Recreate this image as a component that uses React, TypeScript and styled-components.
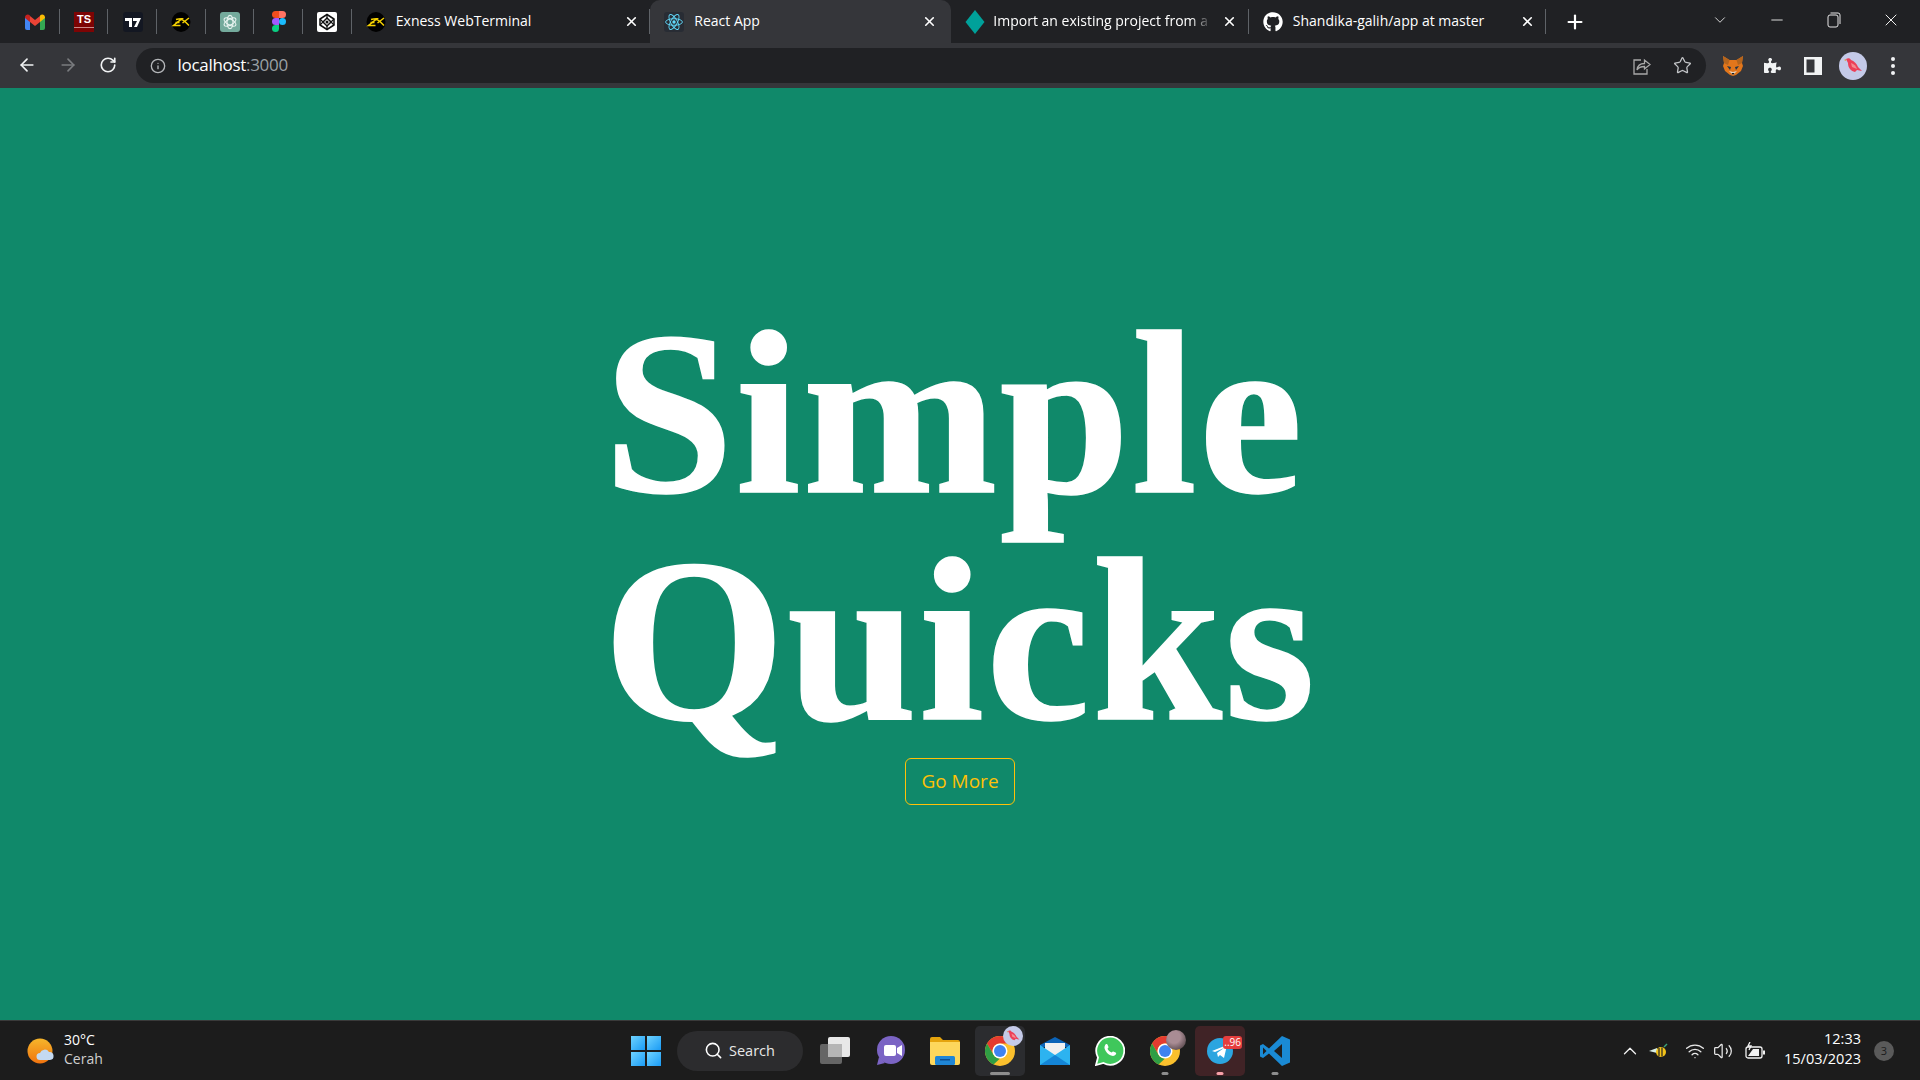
import React from 'react';
import styled, { createGlobalStyle } from 'styled-components';
import {
  ArrowLeft,
  ArrowRight,
  ChevronDown,
  ChevronUp,
  Info,
  Minus,
  Plus,
  RotateCw,
  Search,
  Star,
  Volume2,
  Wifi,
  X,
} from 'lucide-react';
import { FaGithub, FaPuzzlePiece } from 'react-icons/fa';

const GlobalStyle = createGlobalStyle`
  html, body {
    margin: 0;
    padding: 0;
    height: 100%;
    overflow: hidden;
    background: #10896a;
  }
`;

const uiFont = `"Open Sans", "Noto Sans", "Liberation Sans", sans-serif`;

/* ---------- drawn icons ---------- */

const GmailIcon = () => (
  <svg width="20" height="16" viewBox="0 0 20 16">
    <path d="M0 3v11a2 2 0 0 0 2 2h3V7z" fill="#4285f4" />
    <path d="M20 3v11a2 2 0 0 1-2 2h-3V7z" fill="#34a853" />
    <path d="M5 8V2l5 4 5-4v6l-5 4z" fill="#ea4335" />
    <path d="M0 3.5C0 1 2.6-.5 4.5 1L5 2v6L0 4z" fill="#c5221f" />
    <path d="M20 3.5C20 1 17.4-.5 15.5 1L15 2v6l5-4z" fill="#fbbc04" />
  </svg>
);

const TradingIcon = () => (
  <svg width="20" height="20" viewBox="0 0 20 20">
    <rect width="20" height="20" rx="3" fill="#131722" />
    <path d="M2 6h7v9H6V9H2zM10 6h8l-4 9h-3l3-6h-4z" fill="#fff" />
  </svg>
);

const ExnessIcon = () => (
  <svg width="20" height="20" viewBox="0 0 20 20">
    <ellipse cx="10" cy="10" rx="9.5" ry="10" fill="#000" />
    <g fill="none" stroke="#f4d000" strokeWidth="1.5">
      <path d="M5 7.5c2-.6 4-.9 6-.8L2.5 13.5h7" />
      <path d="M10 7.5c2.5 0 5 3 8 6" />
      <path d="M18 6l-6.5 5" />
      <path d="M4.5 10.5h4" />
    </g>
  </svg>
);

const GptIcon = () => (
  <svg width="20" height="20" viewBox="0 0 20 20">
    <rect width="20" height="20" rx="3" fill="#74aa9c" />
    <g fill="none" stroke="#e8f3f0" strokeWidth="1.2">
      <ellipse cx="10" cy="10" rx="3" ry="6.6" />
      <ellipse cx="10" cy="10" rx="3" ry="6.6" transform="rotate(60 10 10)" />
      <ellipse cx="10" cy="10" rx="3" ry="6.6" transform="rotate(120 10 10)" />
    </g>
  </svg>
);

const FigmaIcon = () => (
  <svg width="14" height="21" viewBox="0 0 14 21">
    <path d="M7 0H3.5a3.5 3.5 0 0 0 0 7H7z" fill="#f24e1e" />
    <path d="M7 0h3.5a3.5 3.5 0 0 1 0 7H7z" fill="#ff7262" />
    <path d="M7 7H3.5a3.5 3.5 0 0 0 0 7H7z" fill="#a259ff" />
    <circle cx="10.5" cy="10.5" r="3.5" fill="#1abcfe" />
    <path d="M7 14H3.5A3.5 3.5 0 1 0 7 17.5z" fill="#0acf83" />
  </svg>
);

const CodepenIcon = () => (
  <svg width="20" height="20" viewBox="0 0 20 20">
    <rect width="20" height="20" rx="2" fill="#fff" />
    <path d="M10 2.5l7 4.5v6l-7 4.5L3 13V7z" fill="none" stroke="#111" strokeWidth="1.5" />
    <path d="M10 6l4 4-4 4-4-4z" fill="none" stroke="#111" strokeWidth="1.5" />
    <path d="M10 2.5V6M10 14v3.5M3 7l3 3-3 3M17 7l-3 3 3 3" fill="none" stroke="#111" strokeWidth="1.2" />
    <circle cx="10" cy="10" r="1.5" fill="#111" />
  </svg>
);

const ReactIcon = () => (
  <svg width="20" height="20" viewBox="0 0 20 20">
    <rect width="20" height="20" rx="3" fill="#282c34" />
    <circle cx="10" cy="10" r="1.7" fill="#61dafb" />
    <g fill="none" stroke="#61dafb" strokeWidth="0.9">
      <ellipse cx="10" cy="10" rx="8.4" ry="3.3" />
      <ellipse cx="10" cy="10" rx="8.4" ry="3.3" transform="rotate(60 10 10)" />
      <ellipse cx="10" cy="10" rx="8.4" ry="3.3" transform="rotate(120 10 10)" />
    </g>
  </svg>
);

const DiamondIcon = () => (
  <svg width="20" height="24" viewBox="0 0 20 24">
    <path d="M10 0l9.5 12L10 24 .5 12z" fill="#00a19a" />
  </svg>
);

const RestoreIcon = () => (
  <svg width="14" height="16" viewBox="0 0 14 16" fill="none" stroke="#e6e6e6">
    <rect x="1" y="3" width="10" height="12" rx="2" />
    <path d="M3.5 1H11a2 2 0 0 1 2 2v9" />
  </svg>
);

const ShareIcon = () => (
  <svg width="18" height="18" viewBox="0 0 18 18" fill="none" stroke="#a8a8a8" strokeWidth="1.3">
    <path d="M8 3H1v14h13v-5" />
    <path d="M4 13c.5-4.5 3.5-6.5 7.5-6.5V3L17 7.5 11.5 12V9.5C8 9.5 5.5 10.5 4 13z" />
  </svg>
);

const FoxIcon = () => (
  <svg width="20" height="20" viewBox="0 0 20 20">
    <path d="M0 0l6.5 4h7L20 0l-1 7 1 3-2 5-5 4-3 1-3-1-5-4-2-5 1-3z" fill="#e2761b" />
    <path d="M0 0l6.5 4L5 9 1 7zM20 0l-6.5 4L15 9l4-2z" fill="#b5651d" />
    <path d="M4 10l4 1-1 3zM16 10l-4 1 1 3z" fill="#233447" />
    <path d="M6 15l4 4 4-4-4 1z" fill="#e4d5c3" />
    <path d="M8.5 17h3l-1.5 2z" fill="#161616" />
  </svg>
);

const SidePanelIcon = () => (
  <svg width="18" height="18" viewBox="0 0 18 18">
    <path d="M0 0h18v18H0zM2.5 2.5v13h8v-13z" fill="#f1f3f4" fillRule="evenodd" />
  </svg>
);

const BirdAvatar = ({ size }: { size: number }) => (
  <svg width={size} height={size} viewBox="0 0 28 28">
    <circle cx="14" cy="14" r="14" fill="#c4cae8" />
    <path d="M7 7c2-1 4-1 5 1 3 1 6 4 7 7l4 4-5-1-2 2c-4-1-7-4-7-9z" fill="#ec3f58" />
    <path d="M7 7l-2 1 2 1z" fill="#d9a04a" />
    <path d="M12 11c3 1 5 3 6 6l-5-2z" fill="#f58a8f" />
  </svg>
);

const WeatherIcon = () => (
  <svg width="28" height="28" viewBox="0 0 28 28">
    <defs>
      <linearGradient id="sun" x1="0" y1="0" x2="0" y2="1">
        <stop offset="0" stopColor="#f6b62b" />
        <stop offset="1" stopColor="#f0730f" />
      </linearGradient>
    </defs>
    <circle cx="13" cy="14" r="12.5" fill="url(#sun)" />
    <path d="M13 23a3.5 3.5 0 0 1 0-7 5 5 0 0 1 9-1 4 4 0 0 1 1 8z" fill="#c4d9f2" />
  </svg>
);

const StackIcon = () => (
  <svg width="32" height="30" viewBox="0 0 32 30">
    <rect x="9" y="1" width="22" height="20" rx="2" fill="#e8e8e8" />
    <rect x="1" y="8" width="22" height="20" rx="2" fill="#6e6e6e" opacity="0.9" />
    <rect x="9" y="8" width="14" height="13" fill="#b5b5b5" />
  </svg>
);

const MeetIcon = () => (
  <svg width="30" height="30" viewBox="0 0 30 30">
    <circle cx="16" cy="14" r="14" fill="#7b64c4" />
    <path d="M2 29l2-8 6 6z" fill="#7b64c4" />
    <rect x="9" y="9" width="12" height="11" rx="2" fill="#fff" />
    <path d="M22 12l5-3v11l-5-3z" fill="#fff" />
  </svg>
);

const FolderIcon = () => (
  <svg width="30" height="28" viewBox="0 0 30 28">
    <path d="M0 2a2 2 0 0 1 2-2h8l3 3h15a2 2 0 0 1 2 2v3H0z" fill="#e5a40d" />
    <path d="M0 5h30v21a2 2 0 0 1-2 2H2a2 2 0 0 1-2-2z" fill="#fdd75c" />
    <rect x="5" y="19" width="20" height="9" rx="1.5" fill="#1f86d6" />
    <rect x="10" y="22" width="10" height="1.5" fill="#0c4f91" />
  </svg>
);

const ChromeIcon = () => (
  <svg width="30" height="30" viewBox="0 0 30 30">
    <circle cx="15" cy="15" r="15" fill="#fbc02d" />
    <path d="M15 0a15 15 0 0 1 13 7.5H15a7.5 7.5 0 0 0-6.5 11.25L2 7.5A15 15 0 0 1 15 0z" fill="#e53b30" />
    <path d="M2 7.5l6.5 11.25A7.5 7.5 0 0 0 15 22.5L8.5 28.5A15 15 0 0 1 2 7.5z" fill="#2f9e44" />
    <circle cx="15" cy="15" r="7.5" fill="#fff" />
    <circle cx="15" cy="15" r="6" fill="#3f83f0" />
  </svg>
);

const MailIcon = () => (
  <svg width="30" height="28" viewBox="0 0 30 28">
    <path d="M0 8L15 0l15 8v2H0z" fill="#0c64b8" />
    <path d="M5 6h20v9l-10 5-10-5z" fill="#f0f0f0" />
    <path d="M0 8l15 10L30 8v20H0z" fill="#2db3f0" />
    <path d="M0 28l15-10 15 10z" fill="#1485d6" />
  </svg>
);

const WhatsappIcon = () => (
  <svg width="30" height="30" viewBox="0 0 30 30">
    <path d="M1 29l2-7.5A14 14 0 1 1 8.5 27z" fill="#3fc75b" stroke="#fff" strokeWidth="1.8" />
    <path
      d="M10.5 8.5c1-.8 1.8-.5 2.2.5l.8 2c.1.5-.5 1.2-1 1.8.8 1.7 2.2 3 4 3.8.6-.5 1.2-1.3 1.8-1.2l2.2 1c.8.4.9 1.2.2 2.2-1 1.3-2.8 1.7-4.7.8-3-1.2-5.3-3.5-6.3-6.5-.5-1.8 0-3.3.8-4.4z"
      fill="#fff"
    />
  </svg>
);

const TelegramIcon = () => (
  <svg width="26" height="26" viewBox="0 0 26 26">
    <circle cx="13" cy="13" r="13" fill="#2ca5e0" />
    <path d="M5 13l15-6-3 13-4-3-2 2-1-4 7-5-9 4z" fill="#fff" />
  </svg>
);

const VscodeIcon = () => (
  <svg width="30" height="30" viewBox="0 0 30 30">
    <path d="M22 0l8 3.5v23L22 30 9 17.5 3 22l-3-1.5v-11L3 8l6 4.5z" fill="#1a8ad4" />
    <path d="M22 8l-8 7 8 7z" fill="#1f1f1f" />
    <path d="M3 11.5v7l3.5-3.5z" fill="#1f1f1f" />
  </svg>
);

const BeeIcon = () => (
  <svg width="20" height="16" viewBox="0 0 20 16">
    <path d="M0 8l8-3v5z" fill="#d8efe8" />
    <ellipse cx="12" cy="9" rx="5" ry="5" fill="#f2c21a" />
    <path d="M10 5v8M13 4.5v9" stroke="#222" strokeWidth="1.2" />
    <path d="M15 4l3-3" stroke="#3aa37c" strokeWidth="1.5" />
  </svg>
);

const BatteryIcon = () => (
  <svg width="21" height="18" viewBox="0 0 21 18" fill="none" stroke="#f2f2f2" strokeWidth="1.3">
    <rect x="1" y="5" width="16" height="11" rx="2" />
    <path d="M19 8.5v4" strokeWidth="2" />
    <path d="M3 14l5-7h6v7z" fill="#f2f2f2" stroke="none" />
    <path d="M5 0L3 4h3L4 8" />
  </svg>
);

/* ---------- page ---------- */

export default function App() {
  const pinnedTabs = [
    <GmailIcon />,
    <TsTile>TS</TsTile>,
    <TradingIcon />,
    <ExnessIcon />,
    <GptIcon />,
    <FigmaIcon />,
    <CodepenIcon />,
  ];

  const dockItems: {
    icon: React.ReactNode;
    mark?: 'wide' | 'dot' | 'pink';
    tint?: 'grey' | 'red';
    badge?: React.ReactNode;
  }[] = [
    { icon: <StackIcon /> },
    { icon: <MeetIcon /> },
    { icon: <FolderIcon /> },
    {
      icon: <ChromeIcon />,
      mark: 'wide',
      tint: 'grey',
      badge: (
        <AvatarBadge>
          <BirdAvatar size={20} />
        </AvatarBadge>
      ),
    },
    { icon: <MailIcon /> },
    { icon: <WhatsappIcon /> },
    { icon: <ChromeIcon />, mark: 'dot', badge: <PhotoBadge /> },
    { icon: <TelegramIcon />, mark: 'pink', tint: 'red', badge: <CountBadge>..96</CountBadge> },
    { icon: <VscodeIcon />, mark: 'dot' },
  ];

  return (
    <Screen>
      <GlobalStyle />

      <TabStrip>
        <PinnedGroup>
          {pinnedTabs.map((icon, i) => (
            <PinnedTab key={i}>{icon}</PinnedTab>
          ))}
        </PinnedGroup>
        <Tab $w={298.5} $separated>
          <TabFavicon>
            <ExnessIcon />
          </TabFavicon>
          <TabTitle>Exness WebTerminal</TabTitle>
          <TabClose>
            <X size={15} strokeWidth={2.6} />
          </TabClose>
        </Tab>
        <Tab $w={301} $active>
          <TabFavicon>
            <ReactIcon />
          </TabFavicon>
          <TabTitle>React App</TabTitle>
          <TabClose>
            <X size={15} strokeWidth={2.6} />
          </TabClose>
        </Tab>
        <Tab $w={297.5} $separated>
          <TabFavicon $narrow>
            <DiamondIcon />
          </TabFavicon>
          <TabTitle $faded>Import an existing project from a</TabTitle>
          <TabClose>
            <X size={15} strokeWidth={2.6} />
          </TabClose>
        </Tab>
        <Tab $w={297.5} $separated>
          <TabFavicon>
            <FaGithub size={20} color="#fff" />
          </TabFavicon>
          <TabTitle>Shandika-galih/app at master</TabTitle>
          <TabClose>
            <X size={15} strokeWidth={2.6} />
          </TabClose>
        </Tab>
        <NewTab>
          <Plus size={22} strokeWidth={2.4} color="#fff" />
        </NewTab>
        <WindowControls>
          <WindowButton $w={57}>
            <ChevronDown size={18} strokeWidth={1.2} color="#e6e6e6" />
          </WindowButton>
          <WindowButton $w={58}>
            <Minus size={18} strokeWidth={1.2} color="#f0f0f0" />
          </WindowButton>
          <WindowButton $w={56}>
            <RestoreIcon />
          </WindowButton>
          <WindowButton $w={58}>
            <X size={20} strokeWidth={1.2} color="#f0f0f0" />
          </WindowButton>
        </WindowControls>
      </TabStrip>

      <Toolbar>
        <NavButton>
          <ArrowLeft size={20} strokeWidth={2} color="#f1f3f4" />
        </NavButton>
        <NavButton>
          <ArrowRight size={20} strokeWidth={2} color="#7a7c7f" />
        </NavButton>
        <NavButton>
          <RotateCw size={18} strokeWidth={2.2} color="#f1f3f4" />
        </NavButton>
        <AddressBar>
          <Info size={16} strokeWidth={2} color="#b5b7ba" />
          <Url>
            localhost<UrlPort>:3000</UrlPort>
          </Url>
          <AddressActions>
            <ShareIcon />
            <Star size={19} strokeWidth={1.6} color="#c4c6c9" />
          </AddressActions>
        </AddressBar>
        <Extensions>
          <ExtButton>
            <FoxIcon />
          </ExtButton>
          <ExtButton>
            <FaPuzzlePiece size={17} color="#f1f3f4" />
          </ExtButton>
          <ExtButton>
            <SidePanelIcon />
          </ExtButton>
          <ExtButton>
            <BirdAvatar size={28} />
          </ExtButton>
          <ExtButton>
            <MenuDots>
              <i />
              <i />
              <i />
            </MenuDots>
          </ExtButton>
        </Extensions>
      </Toolbar>

      <Page>
        <Heading>
          <HeadingLine $nudge={12}>Simple</HeadingLine>
          <HeadingLine $nudge={0}>Quicks</HeadingLine>
        </Heading>
        <GoMore>Go More</GoMore>
      </Page>

      <Taskbar>
        <Weather>
          <WeatherIcon />
          <WeatherText>
            <span>30°C</span>
            <WeatherNote>Cerah</WeatherNote>
          </WeatherText>
        </Weather>
        <Dock>
          <DockSlot $w={52}>
            <WinGrid>
              <WinPane />
              <WinPane />
              <WinPane />
              <WinPane />
            </WinGrid>
          </DockSlot>
          <SearchPill>
            <Search size={19} strokeWidth={2} color="#fff" />
            Search
          </SearchPill>
          {dockItems.map((item, i) => (
            <DockItem key={i} $tint={item.tint}>
              {item.icon}
              {item.badge}
              {item.mark && <RunMark $kind={item.mark} />}
            </DockItem>
          ))}
        </Dock>
        <Tray>
          <TrayIcon $gap={0}>
            <ChevronUp size={22} strokeWidth={1.4} color="#f2f2f2" />
          </TrayIcon>
          <TrayIcon $gap={8}>
            <BeeIcon />
          </TrayIcon>
          <TrayIcon $gap={16}>
            <Wifi size={20} strokeWidth={1.6} color="#e8e8e8" />
          </TrayIcon>
          <TrayIcon $gap={8}>
            <Volume2 size={20} strokeWidth={1.5} color="#e8e8e8" />
          </TrayIcon>
          <TrayIcon $gap={12}>
            <BatteryIcon />
          </TrayIcon>
          <Clock>
            <span>12:33</span>
            <span>15/03/2023</span>
          </Clock>
          <NotifyCount>3</NotifyCount>
        </Tray>
      </Taskbar>
    </Screen>
  );
}

/* ---------- styles ---------- */

const Screen = styled.div`
  width: 1920px;
  height: 1080px;
  display: flex;
  flex-direction: column;
  font-family: ${uiFont};
`;

const TabStrip = styled.div`
  height: 43px;
  flex: none;
  display: flex;
  align-items: stretch;
  box-sizing: border-box;
  background: #202124;
  padding-left: 11px;
`;

const PinnedGroup = styled.div`
  display: flex;
`;

const PinnedTab = styled.div`
  width: 48.7px;
  display: flex;
  align-items: center;
  justify-content: center;
  position: relative;

  &::after {
    content: '';
    position: absolute;
    right: 0;
    top: 9px;
    bottom: 9px;
    width: 1px;
    background: #5f6368;
  }
`;

const TsTile = styled.div`
  width: 20px;
  height: 20px;
  background: #7d0404;
  color: #fff;
  font: bold 11px "Liberation Sans", sans-serif;
  line-height: 14px;
  text-align: center;
  box-sizing: border-box;
  border-bottom: 4px solid #7d0404;
  box-shadow: inset 0 -1px 0 #c98a8a;
`;

const Tab = styled.div<{ $w: number; $active?: boolean; $separated?: boolean }>`
  width: ${(p) => p.$w}px;
  flex: none;
  display: flex;
  align-items: center;
  position: relative;
  box-sizing: border-box;
  padding: 0 ${(p) => (p.$active ? 12 : 9)}px 0 14px;
  background: ${(p) => (p.$active ? '#35363a' : 'transparent')};
  border-radius: ${(p) => (p.$active ? '10px 10px 0 0' : '0')};

  &::after {
    content: '';
    display: ${(p) => (p.$separated ? 'block' : 'none')};
    position: absolute;
    right: 0;
    top: 9px;
    bottom: 9px;
    width: 1px;
    background: #5f6368;
  }
`;

const TabFavicon = styled.div<{ $narrow?: boolean }>`
  width: 20px;
  height: 24px;
  flex: none;
  display: flex;
  align-items: center;
  justify-content: center;
  margin-right: ${(p) => (p.$narrow ? 8 : 10)}px;
`;

const TabTitle = styled.div<{ $faded?: boolean }>`
  flex: 1;
  min-width: 0;
  overflow: hidden;
  white-space: nowrap;
  color: #fff;
  font-size: 14px;
  line-height: 20px;
  padding-bottom: 2px;
  ${(p) =>
    p.$faded
      ? `-webkit-mask-image: linear-gradient(to right, #000 90%, transparent 100%);
         mask-image: linear-gradient(to right, #000 90%, transparent 100%);`
      : ''}
`;

const TabClose = styled.div`
  width: 20px;
  flex: none;
  display: flex;
  align-items: center;
  justify-content: center;
  margin-left: 8px;
  color: #fff;
`;

const NewTab = styled.div`
  width: 58px;
  display: flex;
  align-items: center;
  justify-content: center;
`;

const WindowControls = styled.div`
  margin-left: auto;
  display: flex;
  padding-bottom: 4px;
`;

const WindowButton = styled.div<{ $w: number }>`
  width: ${(p) => p.$w}px;
  display: flex;
  align-items: center;
  justify-content: center;
`;

const Toolbar = styled.div`
  height: 45px;
  flex: none;
  display: flex;
  align-items: center;
  background: #35363a;
  padding: 0 8px 0 7px;
`;

const NavButton = styled.div`
  width: 40.5px;
  height: 35px;
  flex: none;
  display: flex;
  align-items: center;
  justify-content: center;
  padding-bottom: 2px;
  box-sizing: border-box;
`;

const AddressBar = styled.div`
  width: 1570px;
  height: 35px;
  margin-left: 7px;
  flex: none;
  display: flex;
  align-items: center;
  background: #202124;
  border-radius: 18px;
  padding: 0 14px;
  box-sizing: border-box;
`;

const Url = styled.div`
  margin-left: 12px;
  padding-bottom: 2px;
  color: #fff;
  font-size: 17px;
  letter-spacing: -0.3px;
`;

const UrlPort = styled.span`
  color: #9aa0a6;
`;

const AddressActions = styled.div`
  margin-left: auto;
  display: flex;
  align-items: center;
  gap: 22px;
`;

const Extensions = styled.div`
  display: flex;
  align-items: center;
  margin-left: 7px;
`;

const ExtButton = styled.div`
  width: 40px;
  display: flex;
  align-items: center;
  justify-content: center;
`;

const MenuDots = styled.div`
  display: flex;
  flex-direction: column;
  gap: 3px;

  i {
    width: 4px;
    height: 4px;
    border-radius: 50%;
    background: #f1f3f4;
  }
`;

const Page = styled.main`
  flex: 1;
  min-height: 0;
  display: flex;
  flex-direction: column;
  align-items: center;
  justify-content: center;
  background: #10896a;
`;

const Heading = styled.h1`
  margin: -4px 0 4px;
  color: #fff;
  font-family: "Liberation Serif", "Times New Roman", serif;
  font-weight: 700;
  font-size: 234px;
  line-height: 227px;
  letter-spacing: 2px;
  -webkit-text-stroke: 1.5px #fff;
  text-align: center;
`;

const HeadingLine = styled.span<{ $nudge: number }>`
  display: block;
  padding-right: ${(p) => p.$nudge}px;
`;

const GoMore = styled.button`
  width: 110px;
  height: 47px;
  padding: 0;
  background: transparent;
  border: 1px solid #ffc107;
  border-radius: 6px;
  color: #ffc107;
  font-family: ${uiFont};
  font-size: 19px;
`;

const Taskbar = styled.footer`
  height: 60px;
  flex: none;
  box-sizing: border-box;
  border-top: 1px solid #3a3a3a;
  background: #1c1c1c;
  display: grid;
  grid-template-columns: 1fr auto 1fr;
  align-items: center;
  color: #fff;
`;

const Weather = styled.div`
  display: flex;
  align-items: center;
  gap: 9px;
  padding-left: 27px;
`;

const WeatherText = styled.div`
  display: flex;
  flex-direction: column;
  font-size: 14px;
  line-height: 19px;
  padding-bottom: 3px;
`;

const WeatherNote = styled.span`
  color: #cfcfcf;
`;

const Dock = styled.div`
  display: flex;
  align-items: center;
`;

const DockSlot = styled.div<{ $w: number }>`
  width: ${(p) => p.$w}px;
  padding-left: 4px;
  box-sizing: border-box;
  display: flex;
  justify-content: center;
`;

const WinGrid = styled.div`
  display: grid;
  grid-template-columns: 14px 14px;
  grid-template-rows: 14px 14px;
  gap: 2px;
`;

const WinPane = styled.div`
  background: linear-gradient(135deg, #6fd3ff, #1a9bf5);
`;

const SearchPill = styled.div`
  width: 126px;
  height: 40px;
  margin-left: 7px;
  margin-right: 5px;
  border-radius: 20px;
  background: #2c2c2e;
  display: flex;
  align-items: center;
  justify-content: center;
  gap: 6px;
  font-size: 14.5px;
  color: #e8e8e8;
`;

const DockItem = styled.div<{ $tint?: 'grey' | 'red' }>`
  width: 50px;
  height: 50px;
  margin: 0 2.5px;
  flex: none;
  position: relative;
  display: flex;
  align-items: center;
  justify-content: center;
  border-radius: 5px;
  background: ${(p) =>
    p.$tint === 'grey' ? '#2b2c2f' : p.$tint === 'red' ? '#402326' : 'transparent'};
`;

const RunMark = styled.span<{ $kind: 'wide' | 'dot' | 'pink' }>`
  position: absolute;
  bottom: 1px;
  left: 50%;
  transform: translateX(-50%);
  height: 3px;
  border-radius: 2px;
  width: ${(p) => (p.$kind === 'wide' ? 20 : 7)}px;
  background: ${(p) => (p.$kind === 'pink' ? '#f6a0a8' : '#8e8e8e')};
`;

const AvatarBadge = styled.span`
  position: absolute;
  top: 0;
  right: 2px;
  display: flex;
`;

const PhotoBadge = styled.span`
  position: absolute;
  top: 4px;
  right: 4px;
  width: 20px;
  height: 20px;
  border-radius: 50%;
  background: radial-gradient(circle at 40% 35%, #a98c94 35%, #4a3c40 90%);
`;

const CountBadge = styled.span`
  position: absolute;
  top: 10px;
  right: 3px;
  padding: 0 1px;
  height: 13px;
  border-radius: 3px;
  background: #e53e3e;
  color: #fff;
  font-size: 10px;
  line-height: 13px;
`;

const Tray = styled.div`
  display: flex;
  align-items: center;
  justify-content: flex-end;
  padding-right: 26px;
`;

const TrayIcon = styled.div<{ $gap: number }>`
  display: flex;
  align-items: center;
  margin-left: ${(p) => p.$gap}px;
`;

const Clock = styled.div`
  display: flex;
  flex-direction: column;
  align-items: flex-end;
  font-size: 14.5px;
  line-height: 20px;
  margin: 0 13px 0 18px;
  padding-bottom: 3px;
`;

const NotifyCount = styled.div`
  width: 20px;
  height: 20px;
  border-radius: 50%;
  background: #5a5a5a;
  color: #1c1c1c;
  font-size: 11px;
  display: flex;
  align-items: center;
  justify-content: center;
`;
